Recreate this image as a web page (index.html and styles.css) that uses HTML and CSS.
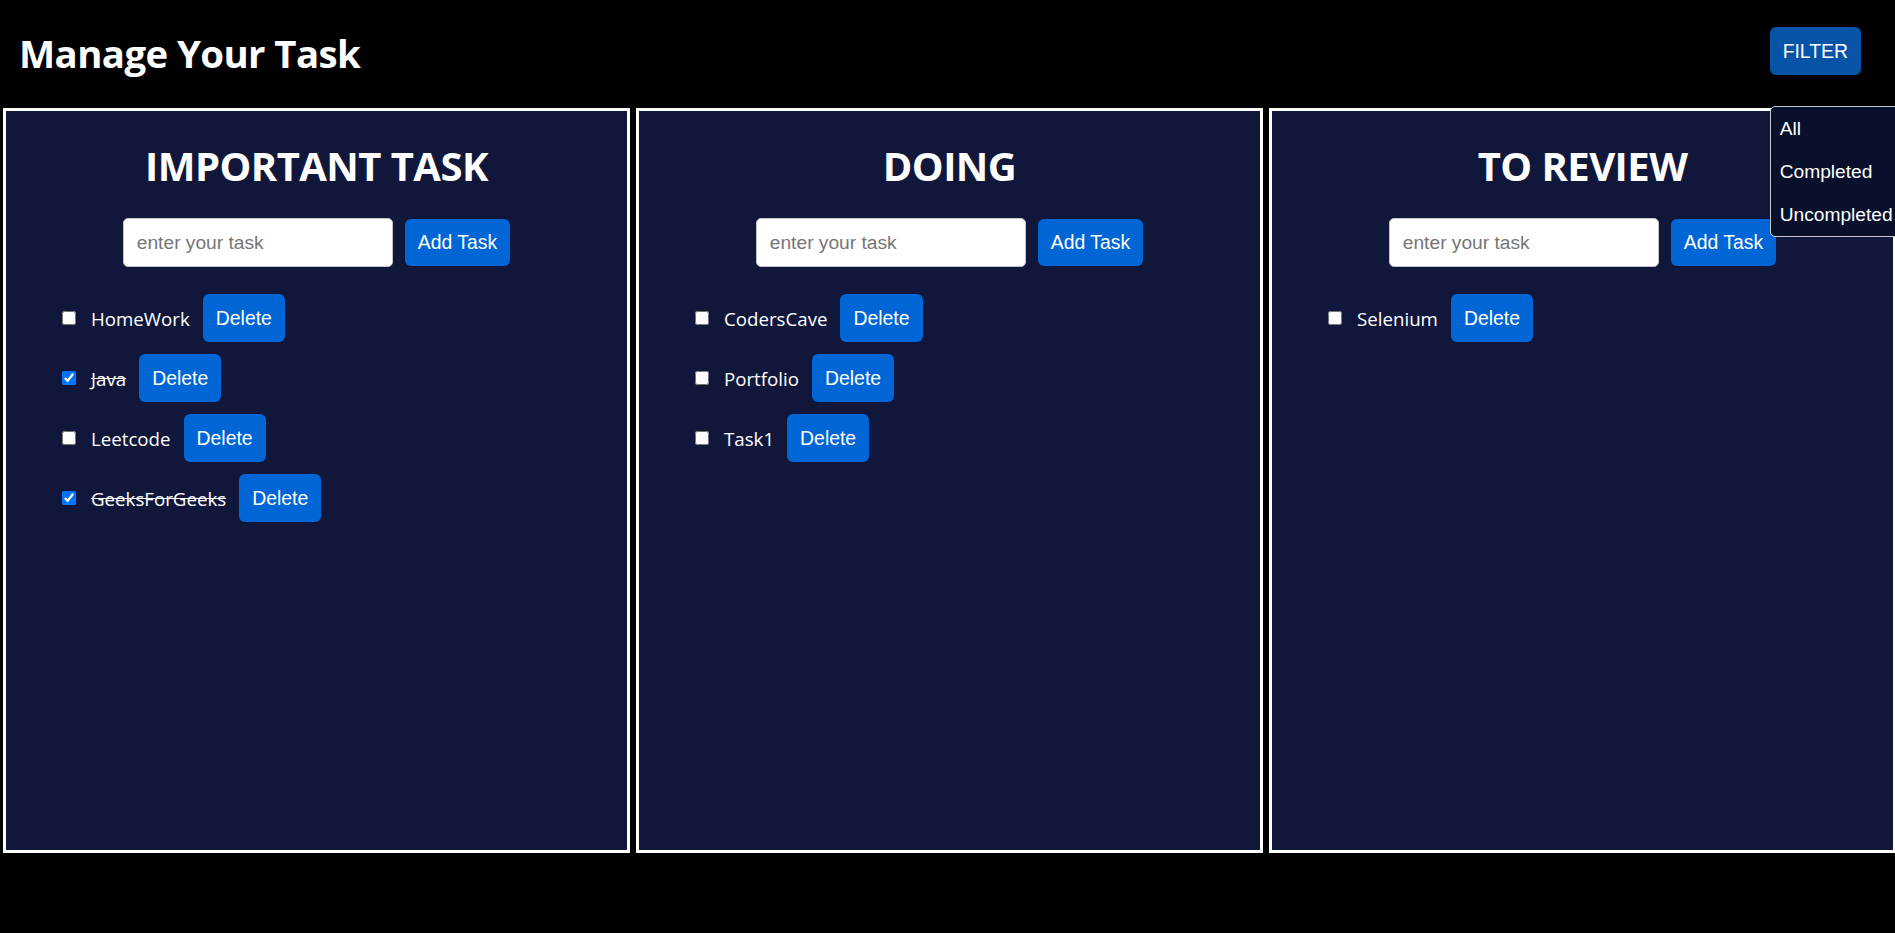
FILE: index.html
```html
<!DOCTYPE html>
<html lang="en">
<head>
<meta charset="utf-8">
<title>Manage Your Task</title>
<link rel="stylesheet" href="styles.css">
</head>
<body>
<header class="topbar">
  <h1 class="page-title">Manage Your Task</h1>
  <div class="filter">
    <button class="btn btn-filter">FILTER</button>
    <ul class="filter-menu">
      <li class="filter-item">All</li>
      <li class="filter-item">Completed</li>
      <li class="filter-item">Uncompleted</li>
    </ul>
  </div>
</header>
<main class="boards">
  <section class="board">
    <h2 class="board-title">IMPORTANT TASK</h2>
    <div class="add-row">
      <input class="task-input" type="text" placeholder="enter your task">
      <button class="btn btn-add">Add Task</button>
    </div>
    <ul class="task-list">
      <li class="task"><input class="task-check" type="checkbox"><span class="task-name">HomeWork</span><button class="btn btn-delete">Delete</button></li>
      <li class="task"><input class="task-check" type="checkbox" checked><span class="task-name done">Java</span><button class="btn btn-delete">Delete</button></li>
      <li class="task"><input class="task-check" type="checkbox"><span class="task-name">Leetcode</span><button class="btn btn-delete">Delete</button></li>
      <li class="task"><input class="task-check" type="checkbox" checked><span class="task-name done">GeeksForGeeks</span><button class="btn btn-delete">Delete</button></li>
    </ul>
  </section>
  <section class="board">
    <h2 class="board-title">DOING</h2>
    <div class="add-row">
      <input class="task-input" type="text" placeholder="enter your task">
      <button class="btn btn-add">Add Task</button>
    </div>
    <ul class="task-list">
      <li class="task"><input class="task-check" type="checkbox"><span class="task-name">CodersCave</span><button class="btn btn-delete">Delete</button></li>
      <li class="task"><input class="task-check" type="checkbox"><span class="task-name">Portfolio</span><button class="btn btn-delete">Delete</button></li>
      <li class="task"><input class="task-check" type="checkbox"><span class="task-name">Task1</span><button class="btn btn-delete">Delete</button></li>
    </ul>
  </section>
  <section class="board">
    <h2 class="board-title">TO REVIEW</h2>
    <div class="add-row">
      <input class="task-input" type="text" placeholder="enter your task">
      <button class="btn btn-add">Add Task</button>
    </div>
    <ul class="task-list">
      <li class="task"><input class="task-check" type="checkbox"><span class="task-name">Selenium</span><button class="btn btn-delete">Delete</button></li>
    </ul>
  </section>
</main>
</body>
</html>
```
FILE: styles.css
```css
html, body {
  margin: 0;
  padding: 0;
  background: #000;
  overflow: hidden;
  height: 100%;
}
body {
  font-family: "Open Sans", "Noto Sans", sans-serif;
  color: #fff;
}
.topbar {
  height: 108px;
  display: flex;
  justify-content: space-between;
  align-items: flex-start;
  padding: 0 34px 0 19px;
  box-sizing: border-box;
}
.page-title {
  margin: 30px 0 0 0;
  font-size: 38.4px;
  line-height: 46px;
  font-weight: 700;
  letter-spacing: -0.6px;
}
.btn {
  font-family: "Liberation Sans", Arial, sans-serif;
  font-size: 19.4px;
  color: #fff;
  border: none;
  border-radius: 6px;
  padding: 0 13px;
  cursor: pointer;
}
.filter {
  position: relative;
  margin-top: 27px;
}
.btn-filter {
  height: 48px;
  background: #0653a8;
}
.filter-menu {
  position: absolute;
  top: 79px;
  left: 0;
  width: 150px;
  margin: 0;
  padding: 0;
  list-style: none;
  background: #09102c;
  border: 1px solid #c8c8c8;
  border-radius: 5px;
  z-index: 10;
}
.filter-item {
  height: 43px;
  line-height: 43px;
  padding-left: 9px;
  font-family: "Liberation Sans", Arial, sans-serif;
  font-size: 19.2px;
  color: #fff;
}
.boards {
  display: flex;
  overflow: hidden;
}
.board {
  flex: 0 0 627px;
  height: 745px;
  box-sizing: border-box;
  margin: 0 3px;
  border: 3px solid #fff;
  background: #11173a;
}
.board-title {
  margin: 31px 0 0 0;
  font-size: 40px;
  line-height: 48px;
  font-weight: 700;
  text-align: center;
  letter-spacing: -0.55px;
}
.add-row {
  display: flex;
  justify-content: center;
  align-items: center;
  gap: 12px;
  margin-top: 28px;
}
.task-input {
  width: 270px;
  height: 49px;
  box-sizing: border-box;
  padding: 0 13px;
  border: 1px solid #c4c4c4;
  border-radius: 5px;
  background: #fff;
  font-family: "Liberation Sans", Arial, sans-serif;
  font-size: 19.2px;
  color: #222;
}
.task-input::placeholder {
  color: #767676;
}
.btn-add {
  height: 47px;
  background: #0066d6;
}
.task-list {
  list-style: none;
  margin: 27px 0 0 0;
  padding: 0 0 0 56px;
  display: flex;
  flex-direction: column;
  gap: 12px;
}
.task {
  display: flex;
  align-items: center;
  height: 48px;
}
.task-check {
  width: 14px;
  height: 14px;
  margin: 0 15px 0 0;
}
.task-name {
  font-size: 18.7px;
  margin-right: 13px;
  padding-top: 1px;
}
.task-name.done {
  text-decoration: line-through;
}
.btn-delete {
  height: 48px;
  background: #0066d6;
}
```
